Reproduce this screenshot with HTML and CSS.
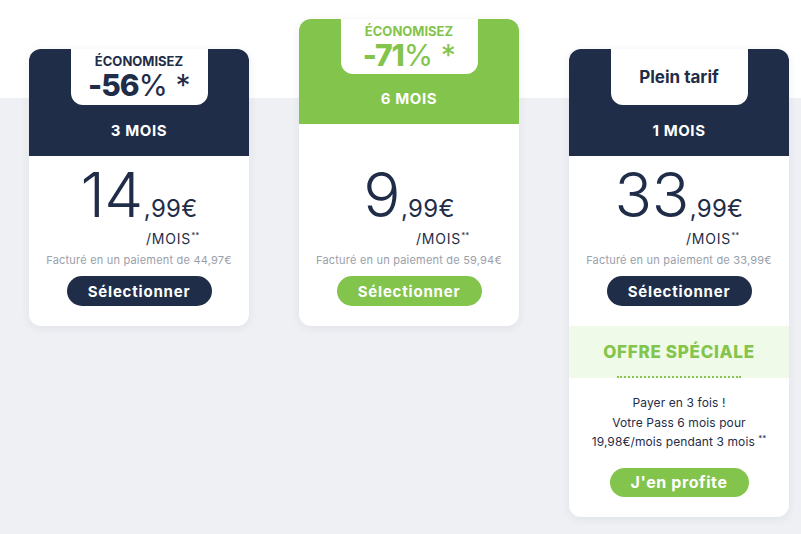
FILE: index.html
```html
<!DOCTYPE html>
<html lang="fr">
<head>
<meta charset="utf-8">
<title>Abonnements</title>
<link rel="stylesheet" href="styles.css">
</head>
<body>
<main class="plans">
  <article class="card card--side">
    <header class="card-head">
      <div class="tab">
        <div class="tab-label">ÉCONOMISEZ</div>
        <div class="tab-value"><b>-56</b>% *</div>
      </div>
      <div class="duration">3 MOIS</div>
    </header>
    <section class="card-body">
      <div class="price"><span class="int">14</span><span class="dec">,99€</span></div>
      <div class="per">/MOIS<sup>**</sup></div>
      <div class="billed">Facturé en un paiement de 44,97€</div>
      <button class="btn">Sélectionner</button>
    </section>
  </article>

  <article class="card card--featured">
    <header class="card-head">
      <div class="tab">
        <div class="tab-label">ÉCONOMISEZ</div>
        <div class="tab-value"><b>-71</b>% *</div>
      </div>
      <div class="duration">6 MOIS</div>
    </header>
    <section class="card-body">
      <div class="price"><span class="int">9</span><span class="dec">,99€</span></div>
      <div class="per">/MOIS<sup>**</sup></div>
      <div class="billed">Facturé en un paiement de 59,94€</div>
      <button class="btn">Sélectionner</button>
    </section>
  </article>

  <article class="card card--side">
    <header class="card-head">
      <div class="tab tab--plain">Plein tarif</div>
      <div class="duration">1 MOIS</div>
    </header>
    <section class="card-body">
      <div class="price"><span class="int">33</span><span class="dec">,99€</span></div>
      <div class="per">/MOIS<sup>**</sup></div>
      <div class="billed">Facturé en un paiement de 33,99€</div>
      <button class="btn">Sélectionner</button>
    </section>
    <section class="offer">
      <div class="offer-head">OFFRE SPÉCIALE</div>
      <p class="offer-text">Payer en 3 fois !<br>Votre Pass 6 mois pour<br>19,98€/mois pendant 3 mois <sup>**</sup></p>
      <button class="btn btn--green btn--offer">J'en profite</button>
    </section>
  </article>
</main>
</body>
</html>
```

FILE: styles.css
```css
* { box-sizing: border-box; }

html, body {
  margin: 0;
  height: 100%;
}

body {
  font-family: "Inter", "Open Sans", sans-serif;
  color: #1f2d48;
  background: linear-gradient(#ffffff 0 98px, #eef0f4 98px);
}

.plans {
  display: grid;
  grid-template-columns: repeat(3, 220px);
  column-gap: 50px;
  align-items: start;
  padding: 19px 0 0 29px;
}

.card {
  background: #ffffff;
  border-radius: 12px;
  overflow: hidden;
  box-shadow: 0 2px 10px rgba(30, 45, 72, 0.07);
}

.card--side { margin-top: 30px; }

.card-head {
  background: #1f2d48;
  display: flex;
  flex-direction: column;
  align-items: center;
}

.card--featured .card-head { background: #83c44c; }

.tab {
  width: 137px;
  height: 56px;
  background: #ffffff;
  border-radius: 0 0 12px 12px;
  padding-top: 5px;
  text-align: center;
  color: #1f2d48;
}

.card--featured .tab { height: 55px; color: #83c44c; }

.tab-label {
  font-size: 13px;
  font-weight: 700;
  line-height: 14px;
}

.tab-value {
  margin-top: 2px;
  font-size: 30px;
  line-height: 30px;
  font-weight: 400;
  letter-spacing: -0.5px;
}

.tab-value b { font-weight: 800; letter-spacing: -1px; }

.tab--plain {
  padding-top: 0;
  display: flex;
  align-items: center;
  justify-content: center;
  font-size: 17px;
  font-weight: 700;
}

.duration {
  height: 51px;
  line-height: 51px;
  color: #ffffff;
  font-size: 15px;
  font-weight: 700;
  letter-spacing: 0.6px;
}

.card--featured .duration { height: 50px; line-height: 50px; }

.card-body {
  padding-bottom: 20px;
  text-align: center;
}

.price {
  margin-top: 7.5px;
  display: flex;
  justify-content: center;
  align-items: baseline;
  line-height: 62px;
  height: 62px;
}

.card--featured .price { margin-top: 39.5px; }

.int {
  font-size: 62px;
  font-weight: 300;
  letter-spacing: -0.5px;
}

.dec {
  font-size: 24px;
  font-weight: 400;
  margin-left: 1px;
  letter-spacing: 0.3px;
}

.per {
  margin-top: 5px;
  padding-left: 117px;
  text-align: left;
  font-size: 14px;
  line-height: 16px;
  letter-spacing: 0.8px;
}

sup {
  font-size: 8px;
  line-height: 0;
  vertical-align: 6px;
  letter-spacing: 0;
}

.billed {
  margin-top: 6px;
  font-size: 11px;
  line-height: 14px;
  letter-spacing: 0.2px;
  color: #9aa0aa;
}

.btn {
  display: block;
  margin: 9.5px auto 0;
  width: 145px;
  height: 30px;
  border: none;
  border-radius: 15px;
  background: #1f2d48;
  color: #ffffff;
  font-family: inherit;
  font-size: 15px;
  font-weight: 700;
  letter-spacing: 0.8px;
  padding: 0;
}

.card--featured .btn { background: #83c44c; }

.offer {
  text-align: center;
  padding-bottom: 20px;
}

.offer-head {
  height: 52px;
  padding-top: 16px;
  background: #effbe8;
  color: #83c44c;
  font-size: 17px;
  font-weight: 800;
  line-height: 20px;
  letter-spacing: 0.7px;
}

.offer-head::after {
  content: "";
  display: block;
  width: 124px;
  margin: 14px auto 0;
  border-top: 2px dotted #8ac653;
}

.offer-text {
  margin: 15px 0 0;
  font-size: 12px;
  line-height: 19.5px;
  letter-spacing: 0.1px;
}

.offer-text sup { vertical-align: 5px; }

.btn--green { background: #83c44c; }

.btn--offer {
  width: 139px;
  height: 29px;
  margin-top: 16px;
  font-size: 16px;
  letter-spacing: 0.6px;
}
```
